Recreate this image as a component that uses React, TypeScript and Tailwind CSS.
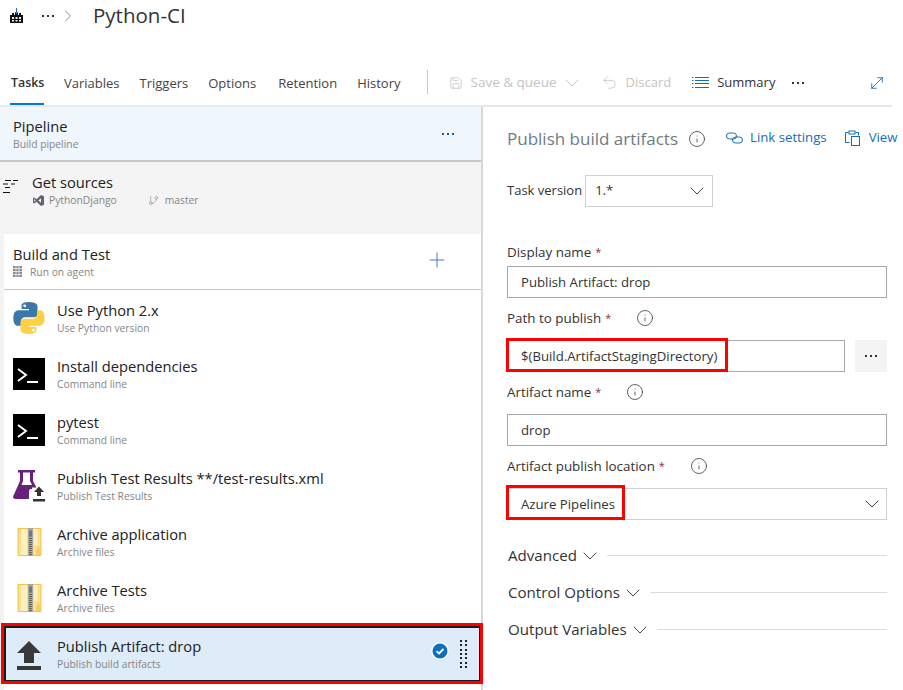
import { ChevronDown, ChevronRight, Info, MoveDiagonal, Plus, Save, Undo2, GitBranch } from 'lucide-react'

const FONT = "font-['Open_Sans','Noto_Sans',sans-serif]"

function Dots({ className = '' }: { className?: string }) {
  return (
    <span className={`flex items-center gap-[3px] ${className}`}>
      <i className="size-[2px] bg-current" />
      <i className="size-[2px] bg-current" />
      <i className="size-[2px] bg-current" />
    </span>
  )
}

function TerminalIcon() {
  return (
    <svg width="32" height="32" viewBox="0 0 32 32">
      <rect width="32" height="32" fill="#000" />
      <path d="M5 11l8 6-8 6" fill="none" stroke="#fff" strokeWidth="2" />
      <path d="M14 24h11" stroke="#fff" strokeWidth="2" />
    </svg>
  )
}

function PythonIcon() {
  const blue = 'M15.9 1.500C8.900 1.500 9.300 4.600 9.300 4.600v3.300h6.800v1H6.600S1.800 8.400 1.800 15.900s4.200 7.200 4.200 7.200h2.600v-3.500s-.1-4.200 4.100-4.200h7s4 .1 4-3.800V5.500S24.400 1.500 15.900 1.500zM12.100 3.700a1.300 1.300 0 1 1 0 2.600 1.300 1.300 0 0 1 0-2.600z'
  return (
    <svg width="32" height="32" viewBox="1.500 1.500 29 29">
      <path d={blue} fill="#3b77a8" fillRule="evenodd" />
      <path d={blue} fill="#ffd043" fillRule="evenodd" transform="rotate(180 16 16)" />
    </svg>
  )
}

function FlaskIcon() {
  return (
    <svg width="32" height="32" viewBox="0 0 32 32">
      <path d="M5 0h17v2.500h-2V11l3.500 6.500H19V29H2.500Q-1 29 .5 25.500L7 11V2.500H5z" fill="#68217a" />
      <path d="M10 2.500h7V11l2 4H8.500L10 11z" fill="#fff" />
      <path d="M19 19h-2l-1 2v8h3z" fill="#fff" />
      <path d="M26 15.500l6.500 7H29v5h-6v-5h-3.500z" fill="#fff" />
      <path d="M26 16.500l5 5.500h-3v4h-4v-4h-3z" fill="#333" />
      <path d="M20 29h12v2.500H20z" fill="#333" />
    </svg>
  )
}

function ZipIcon() {
  return (
    <svg width="32" height="32" viewBox="0 0 32 32">
      <path d="M5 2.500h23v27H5z" fill="#fde08b" stroke="#f2c44f" />
      <path d="M8 3h6v26H8z" fill="#fff0bd" />
      <path d="M21 3h4v16h-4z" fill="#fff0bd" />
      <path d="M25.500 20l2.500 5v4h-5v-4z" fill="#f5cd62" />
      <rect x="15" y="2" width="5" height="28" fill="#a8a8a8" />
      <rect x="16" y="4" width="3" height="7" rx="1.500" fill="#777" />
      <path d="M17.500 12v17" stroke="#5b5b3c" strokeWidth="2.500" strokeDasharray="1 1" />
    </svg>
  )
}

function UploadIcon() {
  return (
    <svg width="32" height="32" viewBox="0 0 32 32">
      <path d="M16 3l12 12h-7v10H11V15H4z" fill="#393939" />
      <path d="M4 28h24v4H4z" fill="#393939" />
    </svg>
  )
}

function AgentIcon() {
  return (
    <svg width="10" height="11" viewBox="0 0 10 11">
      <path d="M0 0h9v11H0z" fill="#8a8a8a" />
      <path d="M0 2.500h9M0 5.500h9M0 8.500h9M3 0v11M6 0v11" stroke="#f2f2f2" strokeWidth="0.800" />
    </svg>
  )
}

function VsIcon() {
  return (
    <svg width="11" height="11" viewBox="0 0 11 11">
      <path d="M8 0l3 1.300v8.400L8 11 3.500 6.800 1.300 8.500 0 7.800V3.200l1.300-.7 2.200 1.700zM8 3.200L5.300 5.500 8 7.800zM1.300 4v3l1.400-1.500z" fill="#68606e" fillRule="evenodd" />
    </svg>
  )
}

function TreeIcon() {
  return (
    <svg width="15" height="14" viewBox="0 0 15 14" stroke="#111" strokeWidth="1">
      <path d="M2 .5h6M10 .5h5M0 4h5M8 4h4M2 7.500h5M0 12.500h7" />
    </svg>
  )
}

function LinkIcon() {
  return (
    <svg width="17" height="12" viewBox="0 0 17 12" fill="none" stroke="#106ebe" strokeWidth="1">
      <rect x="0.500" y="1" width="10" height="6" rx="3" />
      <rect x="6.500" y="5" width="10" height="6" rx="3" />
    </svg>
  )
}

function ClipboardIcon() {
  return (
    <svg width="15" height="16" viewBox="0 0 15 16" fill="none" stroke="#106ebe" strokeWidth="1">
      <path d="M4.500 12.500H.5v-10h3M10.500 2.500h3v3" />
      <rect x="4" y="1" width="6" height="3" />
      <rect x="6.500" y="6.500" width="8" height="9" />
    </svg>
  )
}

function SummaryIcon() {
  return (
    <svg width="17" height="11" viewBox="0 0 17 11" stroke="#106ebe" strokeWidth="1">
      <path d="M0 .5h1.500M3 .5h14M0 3.500h1.500M3 3.500h14M0 6.500h1.500M3 6.500h14M0 10.500h1.500M3 10.500h14" />
    </svg>
  )
}

function BuildLogo() {
  return (
    <svg width="13" height="15" viewBox="0 0 13 15">
      <path d="M0 7h2V5h2v2h1V5h3v2h1V5h2v2h2v8H0z" fill="#111" />
      <path d="M6 0h1v4h1.500L6.500 6.500 4.500 4H6z" fill="#2f6fb5" />
      <path d="M2 9h2v2H2zM5.500 9h2v2h-2zM9 9h2v2H9zM2 12h2v1.500H2zM5.500 12h2v1.500h-2zM9 12h2v1.500H9z" fill="#f2f2f2" />
    </svg>
  )
}

const tabs = ['Tasks', 'Variables', 'Triggers', 'Options', 'Retention', 'History']

const tasks = [
  { title: 'Use Python 2.x', sub: 'Use Python version', icon: <PythonIcon /> },
  { title: 'Install dependencies', sub: 'Command line', icon: <TerminalIcon /> },
  { title: 'pytest', sub: 'Command line', icon: <TerminalIcon /> },
  { title: 'Publish Test Results **/test-results.xml', sub: 'Publish Test Results', icon: <FlaskIcon /> },
  { title: 'Archive application', sub: 'Archive files', icon: <ZipIcon /> },
  { title: 'Archive Tests', sub: 'Archive files', icon: <ZipIcon /> },
]

function TaskRow({ title, sub, icon }: { title: string; sub: string; icon: React.ReactNode }) {
  return (
    <div className="flex h-14 items-center gap-3 pl-[9px]">
      {icon}
      <div>
        <div className="mb-px text-[14.7px] leading-[19px] text-[#212121]">{title}</div>
        <div className="text-[10.3px] leading-[14px] text-[#858585]">{sub}</div>
      </div>
    </div>
  )
}

function Label({ text }: { text: string }) {
  return (
    <div className="flex h-[20px] items-center text-[13.4px] text-[#333]">
      <span>{text}</span>
      <span className="ml-[4px] text-[11px] text-[#8c2f39]">*</span>
      <Info className="ml-[25px] size-[18px] text-[#333]" strokeWidth={1} />
    </div>
  )
}

function Fold({ text }: { text: string }) {
  return (
    <div className="flex h-[37px] items-center pl-px text-[15.1px] text-[#333]">
      <span>{text}</span>
      <ChevronDown className="-mx-[1px] ml-[1px] size-[24px] text-[#333]" strokeWidth={0.9} />
      <div className="ml-[6px] h-px flex-1 bg-[#dcdcdc]" />
    </div>
  )
}

export default function App() {
  return (
    <div className={`${FONT} h-[690px] w-[903px] overflow-hidden bg-white`}>
      {/* breadcrumb */}
      <div className="flex h-[31px] items-center pl-[10px]">
        <BuildLogo />
        <Dots className="ml-[19px] text-[#333]" />
        <ChevronRight className="ml-[4px] size-[20px] text-[#777]" strokeWidth={1} />
        <span className="ml-[15px] text-[20.5px] text-[#333]">Python-CI</span>
      </div>

      {/* tab bar */}
      <div className="mt-[36px] flex h-[40px] w-[892px] items-start border-b-2 border-[#e8e8e8] pl-[10px]">
        {tabs.map((t, i) => (
          <div
            key={t}
            className={`flex h-[38px] items-center border-b-2 pb-[3px] ${i === 3 ? 'mr-[22px]' : 'mr-[20px]'} ${
              i === 0 ? 'w-[34px] border-[#0078d4] pl-px text-[12.4px] font-semibold text-[#333]' : 'border-transparent text-[13px] text-[#444]'
            }`}
          >
            {t}
          </div>
        ))}
        <div className="ml-[6px] mt-[3px] h-6 w-px bg-[#c8c8c8]" />
        <div className="flex h-[31px] items-center text-[13px]">
          <Save className="ml-[21px] size-[14px] text-[#c8c8c8]" strokeWidth={1.5} />
          <span className="ml-[8px] text-[13.5px] text-[#c4c4c4]">Save &amp; queue</span>
          <ChevronDown className="ml-[3px] size-[24px] text-[#c8c8c8]" strokeWidth={0.9} />
          <Undo2 className="ml-[17px] size-[17px] text-[#c8c8c8]" strokeWidth={1.3} />
          <span className="ml-[8px] text-[#c4c4c4]">Discard</span>
          <span className="ml-[21px]"><SummaryIcon /></span>
          <span className="ml-[8px] text-[#333]">Summary</span>
          <Dots className="ml-[17px] text-[#333]" />
          <MoveDiagonal className="ml-[64px] size-[18px] text-[#106ebe]" strokeWidth={1.2} />
        </div>
      </div>

      <div className="flex h-[583px]">
        {/* left pane */}
        <div className="flex w-[483px] shrink-0 flex-col border-r-2 border-[#d8d8d8] bg-[#f4f4f4]">
          <div className="flex h-[55px] shrink-0 items-center justify-between border-b-2 border-[#c8c8c8] bg-[#eff6fc] pl-[13px] pr-[27px]">
            <div>
              <div className="mb-px text-[14.7px] leading-[19px] text-[#212121]">Pipeline</div>
              <div className="text-[10.3px] leading-[14px] text-[#858585]">Build pipeline</div>
            </div>
            <Dots className="text-[#1a5a96]" />
          </div>

          <div className="flex h-[72px] shrink-0 items-start pl-[3px] pt-[11px]">
            <span className="mt-[7px]"><TreeIcon /></span>
            <div className="ml-[14px]">
              <div className="mb-px text-[14.7px] leading-[19px] text-[#212121]">Get sources</div>
              <div className="flex items-center text-[10.3px] leading-[14px] text-[#858585]">
                <span className="ml-[1px]"><VsIcon /></span>
                <span className="ml-[5px]">PythonDjango</span>
                <GitBranch className="ml-[31px] size-[11px]" strokeWidth={1.2} />
                <span className="ml-[6px]">master</span>
              </div>
            </div>
          </div>

          <div className="ml-[4px] flex-1 bg-white">
            <div className="flex h-[56px] items-center justify-between border-b border-[#c8c8c8] pl-[9px] pr-[32px]">
              <div>
                <div className="mb-px text-[14.7px] leading-[19px] text-[#212121]">Build and Test</div>
                <div className="flex items-center gap-[7px] text-[10.3px] leading-[14px] text-[#858585]">
                  <AgentIcon />
                  Run on agent
                </div>
              </div>
              <Plus className="mb-[3px] size-[24px] text-[#2f6fb5]" strokeWidth={0.9} />
            </div>
            {tasks.map((t) => (
              <TaskRow key={t.title + t.sub} title={t.title} sub={t.sub} icon={t.icon} />
            ))}
            {/* selected task, red annotation around it */}
            <div className="relative h-14 border-2 border-[#1b1b1b] bg-[#deecf9]">
              <div className="flex h-full items-center gap-3 pl-[7px] pr-[12px]">
                <UploadIcon />
                <div className="flex-1">
                  <div className="mb-px text-[14.7px] leading-[19px] text-[#212121]">Publish Artifact: drop</div>
                  <div className="text-[10.3px] leading-[14px] text-[#858585]">Publish build artifacts</div>
                </div>
                <svg className="mb-[7px]" width="18" height="18" viewBox="0 0 18 18">
                  <circle cx="9" cy="9" r="8.800" fill="#fff" />
                  <circle cx="9" cy="9" r="7.500" fill="#106ebe" />
                  <path d="M5.500 9.200l2.500 2.300 4.500-4.500" fill="none" stroke="#fff" strokeWidth="1.800" />
                </svg>
                <div className="-ml-px grid grid-cols-2 gap-x-[3px] gap-y-[2.300px]">
                  {Array.from({ length: 14 }).map((_, i) => (
                    <i key={i} className="size-[2px] bg-[#222]" />
                  ))}
                </div>
              </div>
              <div className="absolute -bottom-[4px] -left-[5px] -right-[4px] -top-[5px] border-[3px] border-[#f00]" />
            </div>
          </div>
        </div>

        {/* right pane */}
        <div className="w-[416px] shrink-0 overflow-hidden pl-[24px]">
          <div className="flex h-[68px] items-center whitespace-nowrap pb-[4px]">
            <span className="shrink-0 text-[17px] text-[#6d7b86]">Publish build artifacts</span>
            <Info className="ml-[10px] size-[18px] shrink-0 text-[#333]" strokeWidth={1} />
            <span className="mb-[2px] ml-[20px] flex shrink-0 items-center text-[13.2px] text-[#106ebe]">
              <LinkIcon />
              <span className="ml-[7px]">Link settings</span>
              <span className="ml-[18px]"><ClipboardIcon /></span>
              <span className="ml-[9px]">View YAML</span>
            </span>
          </div>

          <div className="flex h-[32px] items-center text-[13px] text-[#333]">
            <span className="mb-px">Task version</span>
            <div className="ml-[3px] flex h-[32px] w-[128px] items-center justify-between border border-[#d0d0d0] pl-[9px] pr-[3px]">
              <span>1.*</span>
              <ChevronDown className="size-[24px]" strokeWidth={0.9} />
            </div>
          </div>

          <div className="w-[380px]">
            <div className="mt-[35px] flex h-[20px] items-center text-[13.4px] text-[#333]">
              Display name<span className="ml-[4px] text-[11px] text-[#8c2f39]">*</span>
            </div>
            <div className="mt-[4px] flex h-[32px] items-center border border-[#a8a8a8] pl-[13px] pt-[2px] text-[13.2px] text-[#333]">Publish Artifact: drop</div>

            <div className="mt-[10px]"><Label text="Path to publish" /></div>
            <div className="mt-[12px] flex gap-[10px]">
              <div className="relative flex h-[32px] flex-1 items-center border border-[#a8a8a8] pl-[13px] pt-[2px] text-[13.2px] text-[#333]">
                $(Build.ArtifactStagingDirectory)
                <div className="absolute -left-[2px] -top-[3px] h-[34px] w-[222px] border-[3px] border-[#f00]" />
              </div>
              <div className="flex h-[32px] w-[32px] items-center justify-center bg-[#f4f4f4]"><Dots className="text-[#333]" /></div>
            </div>

            <div className="mt-[10px]"><Label text="Artifact name" /></div>
            <div className="mt-[12px] flex h-[32px] items-center border border-[#a8a8a8] pl-[13px] pt-[2px] text-[13.2px] text-[#333]">drop</div>

            <div className="mt-[10px]"><Label text="Artifact publish location" /></div>
            <div className="relative mt-[12px] flex h-[32px] items-center justify-between border border-[#d0d0d0] pl-[13px] pr-[2px] text-[13.2px] text-[#333]">
              <span className="pt-[2px]">Azure Pipelines</span>
              <ChevronDown className="size-[24px]" strokeWidth={0.9} />
              <div className="absolute -left-[2px] -top-[4px] h-[35px] w-[119px] border-[3px] border-[#f00]" />
            </div>

            <div className="mt-[17px]">
              <Fold text="Advanced" />
              <Fold text="Control Options" />
              <Fold text="Output Variables" />
            </div>
          </div>
        </div>
      </div>
    </div>
  )
}
